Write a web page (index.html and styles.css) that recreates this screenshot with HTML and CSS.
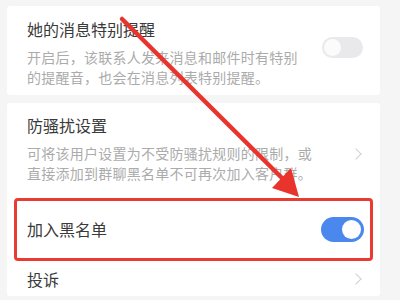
FILE: index.html
```html
<!DOCTYPE html>
<html lang="zh">
<head>
<meta charset="utf-8">
<link rel="stylesheet" href="styles.css">
</head>
<body>
<div class="page">
  <section class="card card-top">
    <div class="row row-desc">
      <div class="text">
        <div class="title">她的消息特别提醒</div>
        <div class="desc">开启后，该联系人发来消息和邮件时有特别<br>的提醒音，也会在消息列表特别提醒。</div>
      </div>
      <span class="switch switch-off"><span class="knob"></span></span>
    </div>
  </section>
  <section class="card card-main">
    <div class="row row-desc2">
      <div class="text">
        <div class="title">防骚扰设置</div>
        <div class="desc">可将该用户设置为不受防骚扰规则的限制，或<br>直接添加到群聊黑名单不可再次加入客户群。</div>
      </div>
      <span class="chevron"></span>
    </div>
    <div class="row row-block">
      <div class="title">加入黑名单</div>
      <span class="switch switch-on"><span class="knob"></span></span>
      <span class="highlight"></span>
    </div>
    <div class="row row-report">
      <div class="title">投诉</div>
      <span class="chevron"></span>
    </div>
  </section>
</div>
<svg class="arrow" width="400" height="300" viewBox="0 0 400 300">
  <line x1="122" y1="19" x2="287" y2="183" stroke="#e8342c" stroke-width="4.5" stroke-linecap="round"/>
  <polygon points="299,197 272,188 291,168" fill="#e8342c"/>
</svg>
</body>
</html>
```
FILE: styles.css
```css
html, body {
  margin: 0;
  padding: 0;
}
body {
  width: 400px;
  height: 300px;
  overflow: hidden;
  background: #f5f5f6;
  font-family: "Noto Sans CJK SC", "Noto Sans", sans-serif;
  position: relative;
}
.page {
  padding: 6px 20px 0 7px;
  display: flex;
  flex-direction: column;
  gap: 8px;
}
.card {
  background: #ffffff;
  border-radius: 3px;
}
.card-top {
  height: 89px;
}
.row {
  display: flex;
  align-items: center;
  padding: 0 16px 0 20px;
  position: relative;
}
.text {
  flex: 1;
  display: flex;
  flex-direction: column;
  gap: 7px;
}
.title {
  font-size: 16px;
  line-height: 22px;
  color: #3a3a3a;
  flex: 1;
}
.desc {
  font-size: 14px;
  line-height: 20px;
  color: #ababab;
  letter-spacing: 0.25px;
}
.row-desc {
  padding-top: 12px;
  align-items: flex-start;
}
.row-desc .switch {
  margin-top: 19px;
}
.row-desc2 {
  height: 93px;
  box-sizing: border-box;
  padding-top: 11px;
  align-items: flex-start;
}
.row-desc2 .chevron {
  margin-top: 36px;
}
.row-block {
  height: 66px;
}
.row-report {
  height: 34px;
}
.switch {
  display: inline-flex;
  align-items: center;
  box-sizing: border-box;
  border-radius: 13px;
  flex: none;
}
.switch-off {
  width: 41px;
  height: 21px;
  background: #e9e9eb;
  padding: 2px;
  margin-right: 1px;
}
.switch-off .knob {
  width: 17px;
  height: 17px;
  border-radius: 50%;
  background: #fbfbfb;
}
.switch-on {
  width: 43px;
  height: 25px;
  background: #4a88ee;
  padding: 3px;
  justify-content: flex-end;
}
.switch-on .knob {
  width: 19px;
  height: 19px;
  border-radius: 50%;
  background: #ffffff;
}
.chevron {
  flex: none;
  width: 7px;
  height: 7px;
  border-top: 1px solid #cfcfcf;
  border-right: 1px solid #cfcfcf;
  transform: rotate(45deg);
  margin-right: 4px;
}
.highlight {
  position: absolute;
  left: 7px;
  right: 7px;
  top: 2px;
  bottom: 1px;
  border: 3px solid #ea3b33;
  border-radius: 4px;
  pointer-events: none;
}
.arrow {
  position: absolute;
  left: 0;
  top: 0;
  pointer-events: none;
}
```
